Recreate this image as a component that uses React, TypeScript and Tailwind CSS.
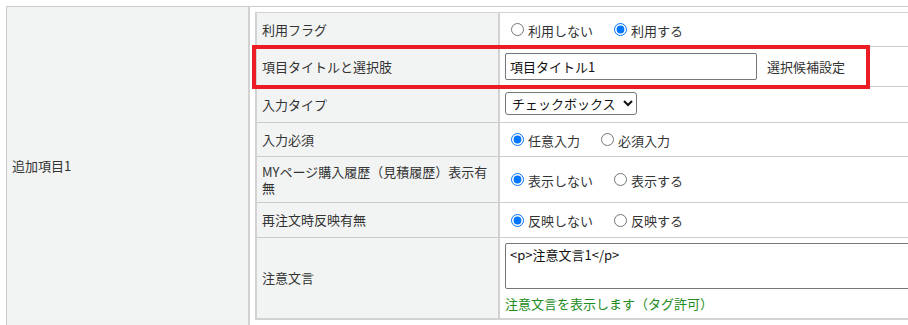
import React from 'react'

const font = { fontFamily: '"Noto Sans CJK JP", "Noto Sans", sans-serif' }

const label = 'w-[243px] shrink-0 bg-[#f2f4f4] border-r-2 border-[#d2d2d2] pl-[5px] flex items-center'
const value = 'flex-1 pl-[5px] flex items-center'

function Radio({ name, text, checked }: { name: string; text: string; checked?: boolean }) {
  return (
    <label className="mr-[15px] inline-flex items-center">
      <input type="radio" name={name} defaultChecked={checked} className="m-0 ml-[6px] mr-[4px] h-[13px] w-[13px]" />
      <span className="pt-[2px]">{text}</span>
    </label>
  )
}

export default function App() {
  return (
    <div className="h-[325px] w-[908px] overflow-hidden bg-white text-[13px] text-[#333]" style={font}>
      <div className="ml-[6px] mt-[6px] flex w-[940px] border border-[#cccccc]">
        <div className="flex w-[243px] shrink-0 items-center border-r-2 border-[#d2d2d2] bg-[#f2f4f4] pl-[5px]">
          追加項目1
        </div>
        <div className="flex-1 p-[5px]">
          <div className="relative border-b-2 border-l-2 border-t border-[#d2d2d2]">
            <div className="flex h-[34px] border-b border-[#cccccc]">
              <div className={label}>利用フラグ</div>
              <div className={value}>
                <Radio name="flag" text="利用しない" />
                <Radio name="flag" text="利用する" checked />
              </div>
            </div>

            <div className="flex h-[40px] border-b border-[#cccccc]">
              <div className={label}>項目タイトルと選択肢</div>
              <div className={value}>
                <input
                  type="text"
                  defaultValue="項目タイトル1"
                  className="h-[27px] w-[252px] rounded-[2px] border border-[#767676] bg-white px-[4px] text-[#111]"
                />
                <span className="ml-[10px]">選択候補設定</span>
              </div>
            </div>

            <div className="flex h-[36px] border-b border-[#cccccc]">
              <div className={label}>入力タイプ</div>
              <div className={value}>
                <select
                  defaultValue="checkbox"
                  className="mb-[2px] h-[23px] w-[132px] rounded-[3px] border border-[#767676] bg-white pl-[2px] text-[#111]"
                >
                  <option value="checkbox">チェックボックス</option>
                  <option value="radio">ラジオボタン</option>
                </select>
              </div>
            </div>

            <div className="flex h-[34px] border-b border-[#cccccc]">
              <div className={label}>入力必須</div>
              <div className={value}>
                <Radio name="req" text="任意入力" checked />
                <Radio name="req" text="必須入力" />
              </div>
            </div>

            <div className="flex h-[46px] border-b border-[#cccccc]">
              <div className={label + ' leading-[16px]'}>
                MYページ購入履歴（見積履歴）表示有
                <br />無
              </div>
              <div className={value}>
                <Radio name="my" text="表示しない" checked />
                <Radio name="my" text="表示する" />
              </div>
            </div>

            <div className="flex h-[35px] border-b border-[#cccccc]">
              <div className={label}>再注文時反映有無</div>
              <div className={value}>
                <Radio name="re" text="反映しない" checked />
                <Radio name="re" text="反映する" />
              </div>
            </div>

            <div className="flex h-[80px]">
              <div className={label}>注意文言</div>
              <div className="flex-1 pl-[5px] pt-[5px]">
                <textarea
                  defaultValue="<p>注意文言1</p>"
                  className="block h-[46px] w-[420px] resize-none rounded-[2px] border border-[#767676] bg-white px-[4px] py-[2px] leading-[18px] text-[#111]"
                />
                <p className="mt-[5px] leading-[19px] text-[#1c8c1c]">注意文言を表示します（タグ許可）</p>
              </div>
            </div>

            <div className="pointer-events-none absolute left-[-5px] top-[32px] h-[44px] w-[618px] border-[4px] border-[#ec1c24]" />
          </div>
        </div>
      </div>
    </div>
  )
}
